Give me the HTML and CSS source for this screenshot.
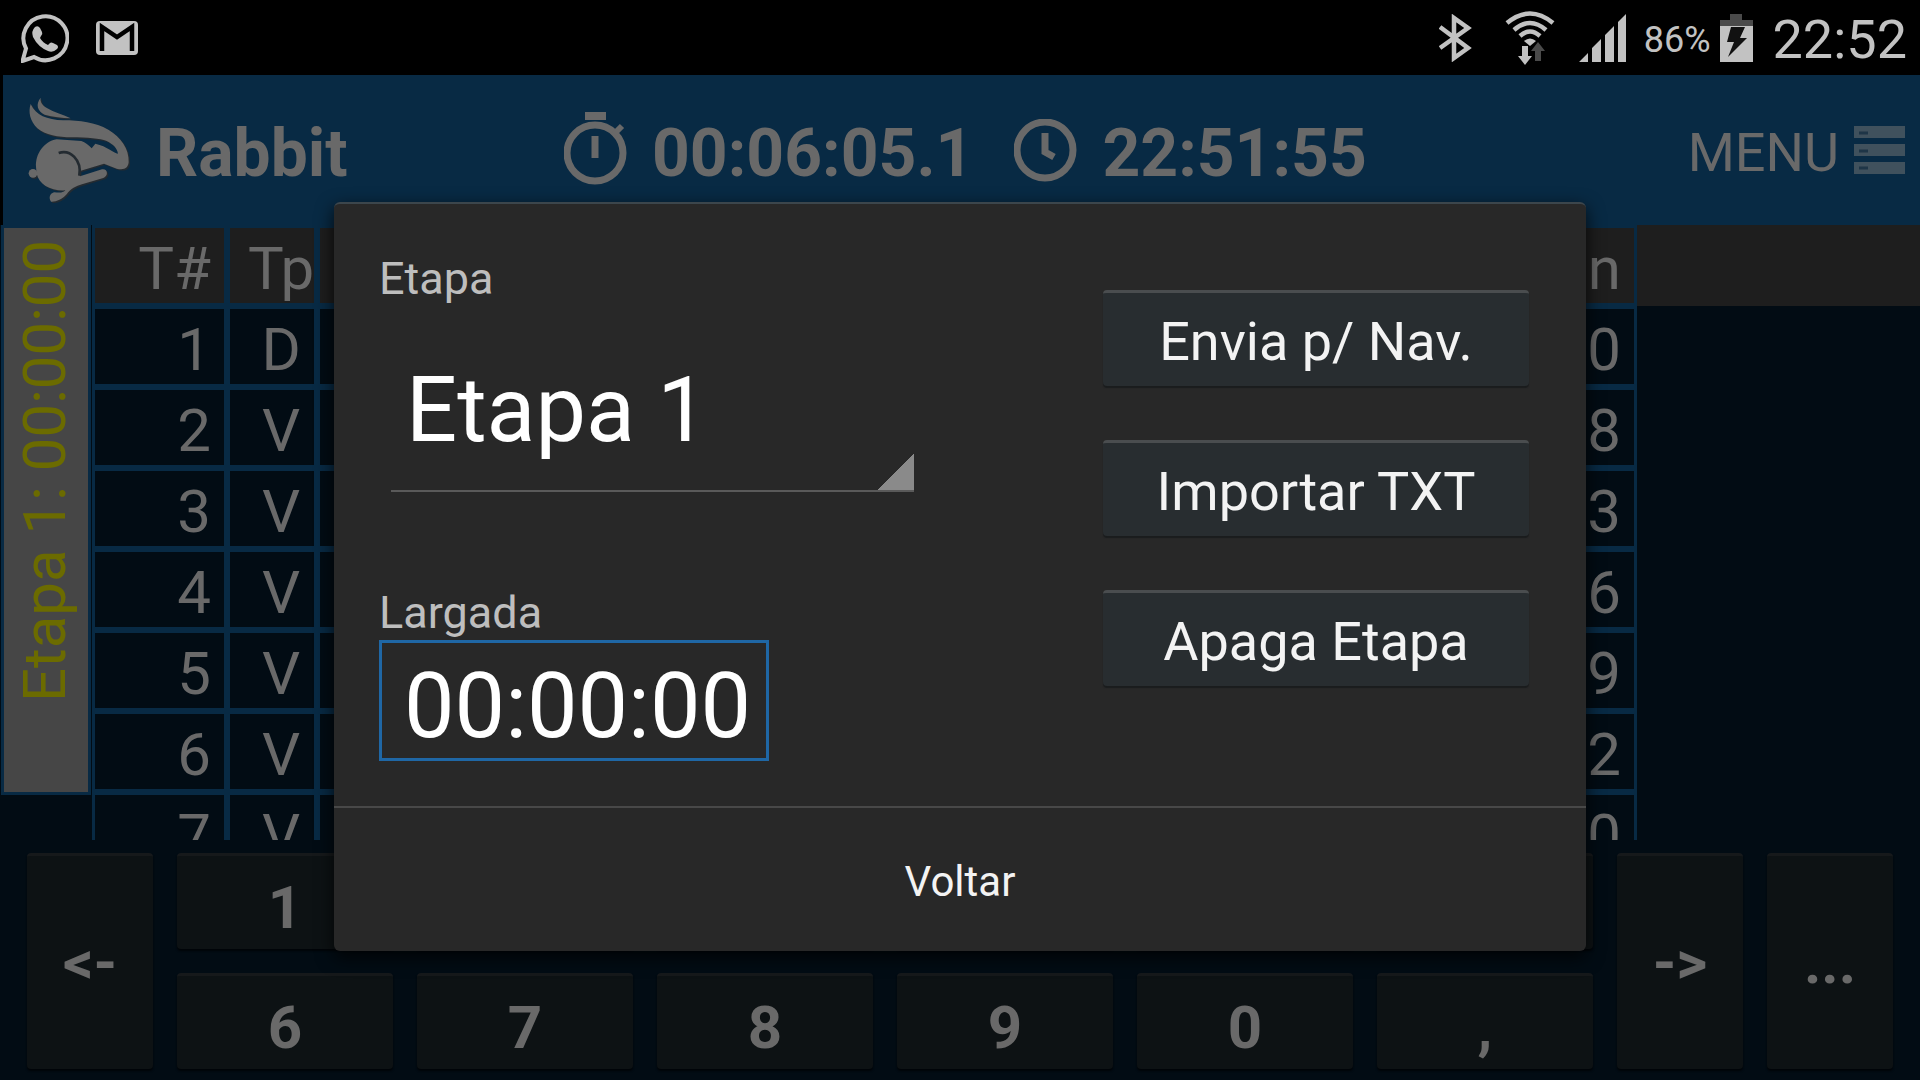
FILE: index.html
```
<!DOCTYPE html>
<html lang="pt-BR">
<head>
    <meta charset="UTF-8">
    <meta name="viewport" content="width=device-width, initial-scale=1.0">
    <title>Rabbit</title>
    <link rel="stylesheet" href="styles.css">
</head>
<body>
    <!-- Barra de status do Android -->
    <div class="status-bar">
        <div class="status-group notifications">
            <svg width="48" height="50" viewBox="0 0 48 50">
                <path d="M1.500 48 L5 35.500 A22 22 0 1 1 13 44 Z" fill="none" stroke="#c2c2c2" stroke-width="4" stroke-linejoin="miter"/>
                <path d="M14 14 q3 -2 5 1 l2 4 q1 2 -1 4 l-1 2 q3 5 8 7 l2 -2 q1 -1 3 0 l4 2 q2 2 0 4 q-4 4 -9 2 q-10 -4 -15 -14 q-2 -6 2 -10z" fill="#c2c2c2"/>
            </svg>
            <svg width="42" height="34" viewBox="0 0 42 34">
                <rect width="42" height="34" rx="4" fill="#c2c2c2"/>
                <path d="M6 30 V6 L21 16 L36 6 V30" fill="none" stroke="#000" stroke-width="4.500"/>
            </svg>
        </div>
        <div class="status-group">
            <svg class="bluetooth" width="33" height="48" viewBox="0 0 33 48">
                <path d="M1 13 L29 34 L15 44 V4 L29 14 L1 34" fill="none" stroke="#c2c2c2" stroke-width="4.500"/>
            </svg>
            <svg class="wifi" width="50" height="54" viewBox="0 0 50 54">
                <g fill="none" stroke="#c2c2c2" stroke-width="4.500">
                    <path d="M2 12 Q25 -7 48 12"/>
                    <path d="M9 19 Q25 5 41 19"/>
                    <path d="M15 25 Q25 16 35 25"/>
                </g>
                <path d="M19 30 Q25 25 31 30 L25 35z" fill="#c2c2c2"/>
                <path d="M17 35 h6 v10 h4 l-7 9 l-7 -9 h4z" fill="#c2c2c2"/>
                <path d="M30 50 h6 v-10 h4 l-7 -9 l-7 9 h4z" fill="#4a4a4a"/>
            </svg>
            <svg class="signal" width="48" height="48" viewBox="0 0 48 48">
                <path d="M0 48 L9 39 V48z M13 48 V34 L22 25 V48z M26 48 V21 L35 12 V48z M39 48 V8 L47 0 V48z" fill="#c2c2c2"/>
            </svg>
            <span class="battery-level">86%</span>
            <svg class="battery" width="33" height="48" viewBox="0 0 33 48">
                <path d="M0 12 V6 H10 V0 H22 V6 H33 V12z" fill="#4a4a4a"/>
                <rect y="12" width="33" height="36" fill="#c2c2c2"/>
                <path d="M11 13 H25 L20 24 H27 L8 43 L14 28 H7z" fill="#111"/>
            </svg>
            <span class="status-clock">22:52</span>
        </div>
    </div>

    <div class="app">
        <!-- Cabeçalho com cronômetro, relógio e menu -->
        <header class="header">
            <div class="brand">
                <svg width="104" height="106" viewBox="84 290 312 318">
                    <defs>
                        <g id="rabbit">
                            <path d="M122 292 C106 312 112 332 134 343 C158 350 186 352 212 354 C186 342 162 337 142 324 C128 315 120 306 122 292z"/>
                            <path d="M92 311 C84 335 90 362 112 384 C135 404 175 411 215 411 C262 412 300 414 320 422 C340 432 352 444 354 460 C340 458 322 438 286 430 L275 444 C266 434 256 426 244 422 L170 417 C130 424 106 462 108 500 L110 520 C118 552 150 572 196 570 C186 580 176 576 162 576 C148 580 146 594 153 604 C168 605 186 598 200 582 C212 564 228 558 246 552 L310 533 C326 527 324 504 306 507 L240 528 L240 512 L312 490 L350 505 C372 510 384 504 386 486 C388 445 362 410 325 388 C285 366 240 360 190 360 C140 358 108 345 92 311z"/>
                            <circle cx="99" cy="519" r="13"/>
                        </g>
                    </defs>
                    <use href="#rabbit" x="4" y="4" fill="#242b31"/>
                    <use href="#rabbit" fill="#696969"/>
                    <path d="M176 458 C210 446 246 478 238 526" fill="none" stroke="#242b31" stroke-width="8"/>
                </svg>
                <span class="title">Rabbit</span>
            </div>
            <svg width="63" height="76" viewBox="0 0 63 76" fill="none" stroke="#696969">
                <ellipse cx="31" cy="41" rx="28" ry="28" stroke-width="7"/>
                <path d="M21 4 H42" stroke-width="8"/>
                <path d="M31 24 V46" stroke-width="7"/>
                <path d="M50 22 L58 14" stroke-width="6"/>
            </svg>
            <span class="timer stopwatch">00:06:05.1</span>
            <svg width="63" height="63" viewBox="0 0 63 63" fill="none" stroke="#696969">
                <circle cx="31" cy="31" r="28" stroke-width="7"/>
                <path d="M31 14 V33 L40 38" stroke-width="7"/>
            </svg>
            <span class="timer clock">22:51:55</span>
            <button class="menu">
                <span>MENU</span>
                <svg width="51" height="48" viewBox="0 0 51 48">
                    <path d="M0 0 H51 V12 H0z M0 18 H51 V30 H0z M0 36 H51 V48 H0z" fill="#40515d"/>
                    <path d="M5 7 H14 M5 25 H14 M5 42 H14" stroke="#1e3547" stroke-width="3"/>
                </svg>
            </button>
        </header>

        <!-- Lista de trechos da etapa -->
        <div class="stage">
            <div class="stage-name">Etapa 1: 00:00:00</div>
            <table class="sections">
                <thead>
                    <tr><th class="number">T#</th><th class="type">Tp</th><th></th><th class="last">n</th><th class="rest"></th></tr>
                </thead>
                <tbody>
                    <tr><td class="number">1</td><td class="type">D</td><td></td><td class="last">0</td><td class="rest"></td></tr>
                    <tr><td class="number">2</td><td class="type">V</td><td></td><td class="last">8</td><td class="rest"></td></tr>
                    <tr><td class="number">3</td><td class="type">V</td><td></td><td class="last">3</td><td class="rest"></td></tr>
                    <tr><td class="number">4</td><td class="type">V</td><td></td><td class="last">6</td><td class="rest"></td></tr>
                    <tr><td class="number">5</td><td class="type">V</td><td></td><td class="last">9</td><td class="rest"></td></tr>
                    <tr><td class="number">6</td><td class="type">V</td><td></td><td class="last">2</td><td class="rest"></td></tr>
                    <tr><td class="number">7</td><td class="type">V</td><td></td><td class="last">0</td><td class="rest"></td></tr>
                </tbody>
            </table>
        </div>

        <!-- Teclado numérico -->
        <div class="keypad">
            <button class="tall">&lt;-</button>
            <button>1</button>
            <button>2</button>
            <button>3</button>
            <button>4</button>
            <button>5</button>
            <button></button>
            <button class="tall">-&gt;</button>
            <button class="tall">...</button>
            <button>6</button>
            <button>7</button>
            <button>8</button>
            <button>9</button>
            <button>0</button>
            <button>,</button>
        </div>

        <!-- Janela de configuração da etapa -->
        <div class="overlay">
            <div class="dialog" role="dialog">
                <div class="dialog-body">
                    <div class="fields">
                        <label for="etapa">Etapa</label>
                        <select id="etapa">
                            <option>Etapa 1</option>
                        </select>
                        <label for="largada">Largada</label>
                        <input type="text" id="largada" value="00:00:00">
                    </div>
                    <div class="actions">
                        <button>Envia p/ Nav.</button>
                        <button>Importar TXT</button>
                        <button>Apaga Etapa</button>
                    </div>
                </div>
                <button class="back">Voltar</button>
            </div>
        </div>
    </div>
</body>
</html>
```

FILE: styles.css
```
* {
    box-sizing: border-box;
}

body {
    margin: 0;
    height: 100vh;
    display: flex;
    flex-direction: column;
    overflow: hidden;
    background-color: #000;
    color: #696969;
    font-family: Roboto, sans-serif;
}

button,
input,
select {
    font-family: inherit;
    margin: 0;
    border: none;
    border-radius: 0;
    color: inherit;
}

svg {
    display: block;
    flex-shrink: 0;
}

/* Barra de status */
.status-bar {
    height: 75px;
    padding: 0 13px 0 21px;
    display: flex;
    justify-content: space-between;
    color: #c2c2c2;
}

.status-group {
    display: flex;
    align-items: center;
}

.notifications {
    gap: 27px;
}

.bluetooth {
    margin-right: 33px;
}

.wifi {
    margin-right: 24px;
}

.signal {
    margin-right: 17px;
}

.battery-level {
    padding-top: 4px;
    font-size: 36px;
    margin-right: 9px;
}

.battery {
    margin-right: 20px;
}

.status-clock {
    padding-top: 4px;
    font-size: 54px;
}

/* Área do aplicativo */
.app {
    position: relative;
    flex: 1;
    min-height: 0;
    display: flex;
    flex-direction: column;
    background-color: #020c14;
}

/* Cabeçalho */
.header {
    height: 150px;
    flex-shrink: 0;
    display: flex;
    align-items: center;
    padding: 0 15px 0 25px;
    border-left: 3px solid #000;
    background-color: #082a44;
}

.brand {
    width: 536px;
    display: flex;
    align-items: center;
    gap: 24px;
}

.title,
.timer {
    padding-top: 6px;
    font-size: 66px;
    font-weight: bold;
}

.timer {
    margin-left: 25px;
}

.stopwatch {
    margin-right: 41px;
}

.menu {
    margin-left: auto;
    padding: 0;
    display: flex;
    align-items: center;
    gap: 15px;
    background: none;
    font-size: 54px;
}

.menu span {
    padding-top: 4px;
}

/* Tabela de trechos */
.stage {
    flex: 1;
    min-height: 0;
    display: flex;
    align-items: flex-start;
    overflow: hidden;
}

.stage-name {
    width: 90px;
    height: 570px;
    margin: 0 1px;
    padding-bottom: 12px;
    border: 3px solid #082a44;
    background-color: #464646;
    color: #6b6b00;
    font-size: 60px;
    line-height: 81px;
    writing-mode: vertical-rl;
    transform: rotate(180deg);
    text-align: end;
    white-space: nowrap;
}

.sections {
    flex: 1;
    table-layout: fixed;
    border-spacing: 0;
    font-size: 60px;
    line-height: 69px;
}

.sections th,
.sections td {
    height: 81px;
    padding: 6px 13px 0 12px;
    border: 3px solid #082a44;
    font-weight: normal;
    text-align: right;
}

.sections th {
    background-color: #1e1e1e;
}

.sections .number {
    width: 135px;
}

.sections .type {
    width: 90px;
    padding: 6px 0 0 18px;
    text-align: center;
}

.sections .last {
    width: 150px;
}

.sections .rest {
    width: 283px;
    border: none;
}

/* Teclado */
.keypad {
    flex-shrink: 0;
    display: grid;
    grid-template-columns: 126px repeat(6, 1fr) 126px 126px;
    grid-template-rows: 96px 96px;
    gap: 24px;
    padding: 13px 27px 11px;
}

.keypad button {
    padding: 9px 0 0;
    border-top: 3px solid #16191b;
    border-radius: 4px;
    background-color: #0d1214;
    box-shadow: 0 2px 2px #010508;
    font-size: 60px;
    font-weight: bold;
}

.keypad .tall {
    grid-row: span 2;
    padding-top: 0;
}

/* Janela sobre o aplicativo */
.overlay {
    position: absolute;
    inset: 0;
    display: flex;
    align-items: center;
    padding: 0 334px 2px;
}

.dialog {
    flex: 1;
    border-top: 2px solid #3c464c;
    border-radius: 6px;
    background-color: #282828;
    box-shadow: 0 6px 18px rgba(0, 0, 0, 0.8);
}

.dialog-body {
    display: flex;
    justify-content: space-between;
    padding: 47px 57px 45px 45px;
}

.fields {
    display: flex;
    flex-direction: column;
    align-items: flex-start;
}

.fields label {
    font-size: 45px;
    line-height: 55px;
    color: #bebebe;
}

.fields select {
    appearance: none;
    width: 523px;
    height: 150px;
    margin: 36px 12px 93px;
    padding: 0 0 12px 15px;
    border-bottom: 2px solid #5a5a5a;
    background: linear-gradient(to bottom right, transparent 50%, #8a8a8a 50%) right bottom / 36px 36px no-repeat;
    color: #fff;
    font-size: 90px;
}

.fields input {
    width: 390px;
    height: 121px;
    padding: 12px 0 0 22px;
    border: 3px solid #1f67a5;
    background: none;
    color: #fff;
    font-size: 90px;
}

.actions {
    display: flex;
    flex-direction: column;
    gap: 54px;
    padding-top: 39px;
}

.actions button {
    width: 426px;
    height: 96px;
    padding: 3px 0 0;
    border-top: 3px solid #4a4d4f;
    border-radius: 4px;
    background-color: #282d30;
    box-shadow: 0 2px 1px #1a1c1d;
    color: #f3f3f3;
    font-size: 54px;
}

.back {
    width: 100%;
    height: 145px;
    padding: 4px 0 0;
    border-top: 2px solid #484848;
    background: none;
    color: #f3f3f3;
    font-size: 42px;
}
```
